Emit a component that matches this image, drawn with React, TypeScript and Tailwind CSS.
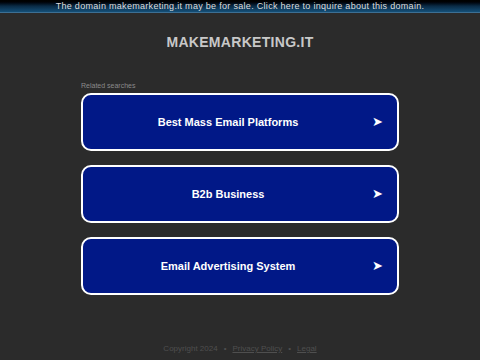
import React from 'react';

const searches = ['Best Mass Email Platforms', 'B2b Business', 'Email Advertising System'];

export default function App() {
  return (
    <div className="w-[480px] h-[360px] bg-[#2b2b2b] flex flex-col items-center overflow-hidden font-['Liberation_Sans',Arial,sans-serif]">
      {/* Sale banner */}
      <div className="w-full h-[13px] bg-gradient-to-b from-[#000000] via-[#0a2a44] to-[#14507a] border-b border-[#3d6f93] flex items-center justify-center">
        <span className="text-[9px] leading-none text-[#dcdcdc] tracking-[0.3px]">The domain makemarketing.it may be for sale. Click here to inquire about this domain.</span>
      </div>

      <h1 className="mt-[22px] text-[14px] leading-none font-bold text-[#c8c8c8] tracking-[0.3px]">MAKEMARKETING.IT</h1>

      <div className="mt-[33px] w-[318px] flex flex-col">
        <span className="text-[7px] leading-none text-[#8a8a8a]">Related searches</span>
        <div className="mt-[4px] flex flex-col gap-[14px]">
          {searches.map((s) => (
            <div
              key={s}
              className="relative h-[58px] rounded-[10px] border-2 border-white bg-[#011887] flex items-center justify-center pr-[24px]"
            >
              <span className="text-[11px] font-bold text-white">{s}</span>
              <span className="absolute right-[14px] top-1/2 -translate-y-1/2 text-[13px] text-white">➤</span>
            </div>
          ))}
        </div>
      </div>

      <div className="mt-auto mb-[7px] flex items-center gap-[6px] text-[8px] leading-none text-[#4f4f4f]">
        <span>Copyright 2024</span>
        <span>•</span>
        <span className="underline">Privacy Policy</span>
        <span>•</span>
        <span className="underline">Legal</span>
      </div>
    </div>
  );
}
